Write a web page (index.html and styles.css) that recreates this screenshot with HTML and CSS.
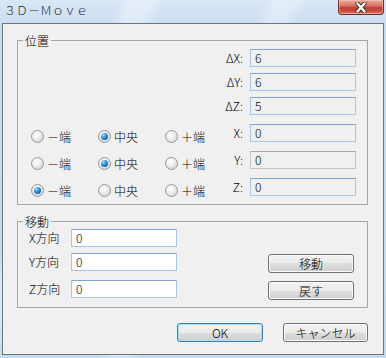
FILE: index.html
```
<!DOCTYPE html>
<html lang="ja">
<head>
<meta charset="utf-8">
<title>3D-Move</title>
<link rel="stylesheet" href="styles.css">
</head>
<body>
<div class="window">
  <div class="titlebar">
    <span class="title">３Ｄ－Ｍｏｖｅ</span>
    <div class="close">
      <svg width="14" height="11" viewBox="0 0 14 11">
        <path d="M3.5 1.5 L10.5 9.5 M10.5 1.5 L3.5 9.5" stroke="#4a2a28" stroke-width="4.2" stroke-linecap="round" fill="none"/>
        <path d="M3.5 1.5 L10.5 9.5 M10.5 1.5 L3.5 9.5" stroke="#ffffff" stroke-width="2.4" stroke-linecap="round" fill="none"/>
      </svg>
    </div>
  </div>
  <div class="client">
    <fieldset class="group g1">
      <legend>位置</legend>
      <div class="g1-body">
        <div class="delta-rows">
          <div class="frow"><span class="flabel">ΔX:</span><div class="field ro">6</div></div>
          <div class="frow"><span class="flabel">ΔY:</span><div class="field ro">6</div></div>
          <div class="frow"><span class="flabel">ΔZ:</span><div class="field ro">5</div></div>
        </div>
        <div class="pos-rows">
          <div class="frow">
            <div class="radios">
              <div class="ritem"><span class="radio"></span><span class="rlabel">－端</span></div>
              <div class="ritem"><span class="radio on"><span class="dot"></span></span><span class="rlabel">中央</span></div>
              <div class="ritem"><span class="radio"></span><span class="rlabel">＋端</span></div>
            </div>
            <span class="flabel">X:</span><div class="field ro">0</div>
          </div>
          <div class="frow">
            <div class="radios">
              <div class="ritem"><span class="radio"></span><span class="rlabel">－端</span></div>
              <div class="ritem"><span class="radio on"><span class="dot"></span></span><span class="rlabel">中央</span></div>
              <div class="ritem"><span class="radio"></span><span class="rlabel">＋端</span></div>
            </div>
            <span class="flabel">Y:</span><div class="field ro gray">0</div>
          </div>
          <div class="frow">
            <div class="radios">
              <div class="ritem"><span class="radio on"><span class="dot"></span></span><span class="rlabel">－端</span></div>
              <div class="ritem"><span class="radio"></span><span class="rlabel">中央</span></div>
              <div class="ritem"><span class="radio"></span><span class="rlabel">＋端</span></div>
            </div>
            <span class="flabel">Z:</span><div class="field ro">0</div>
          </div>
        </div>
      </div>
    </fieldset>
    <fieldset class="group g2">
      <legend>移動</legend>
      <div class="g2-body">
        <div class="mrow"><span class="mlabel">X方向</span><div class="field">0</div></div>
        <div class="mrow"><span class="mlabel">Y方向</span><div class="field">0</div><div class="btn side">移動</div></div>
        <div class="mrow last"><span class="mlabel">Z方向</span><div class="field">0</div><div class="btn side">戻す</div></div>
      </div>
    </fieldset>
    <div class="footer">
      <div class="btn ok default">OK</div>
      <div class="btn cancel">キャンセル</div>
    </div>
  </div>
</div>
</body>
</html>
```
FILE: styles.css
```
html, body {
  margin: 0;
  padding: 0;
}
body {
  font-family: "Noto Sans CJK JP", "Noto Sans", sans-serif;
  font-size: 12px;
  font-weight: 300;
  color: #000;
  background: #cfe0f2;
}
.window {
  width: 386px;
  height: 358px;
  box-sizing: border-box;
  padding: 0 2px 3px 2px;
  display: flex;
  flex-direction: column;
  background:
    linear-gradient(115deg, rgba(255,255,255,0) 0 22%, rgba(255,255,255,0.35) 24% 27%, rgba(255,255,255,0) 30% 48%, rgba(255,255,255,0.3) 50% 53%, rgba(255,255,255,0) 56% 100%),
    linear-gradient(#d9e7f5, #c8dbef 30px, #c6daee);
}
.titlebar {
  height: 23px;
  flex: none;
  display: flex;
  justify-content: space-between;
  align-items: flex-start;
}
.title {
  padding: 3px 0 0 2px;
  line-height: 14px;
  font-size: 12px;
  color: #1b2a3d;
}
.close {
  width: 46px;
  height: 15px;
  box-sizing: border-box;
  border: 1px solid #6b2e28;
  border-top: none;
  border-radius: 0 0 4px 4px;
  background: linear-gradient(#e9a99c 0%, #d8786a 40%, #c0402f 55%, #c84e3c 80%, #e0887a 100%);
  box-shadow: inset 0 0 0 1px rgba(255,210,200,0.45);
  display: flex;
  align-items: center;
  justify-content: center;
}
.close svg {
  display: block;
}
.client {
  flex: 1;
  border: 1px solid #6b7580;
  background: #f0f0f0;
  display: flex;
  flex-direction: column;
  padding: 10px 15px 0 14px;
}
.group {
  margin: 0;
  padding: 0;
  border: 1px solid #a5a5a5;
  min-width: 0;
}
.group legend {
  margin-left: 5px;
  padding: 0 2px;
  height: 13px;
  line-height: 13px;
}
.g1-body {
  padding: 2px 11px 8px 13px;
  display: flex;
  flex-direction: column;
  gap: 9px;
}
.delta-rows {
  display: flex;
  flex-direction: column;
  gap: 6px;
}
.pos-rows {
  display: flex;
  flex-direction: column;
  gap: 9px;
}
.frow {
  display: flex;
  justify-content: flex-end;
  align-items: center;
  height: 18px;
}
.flabel {
  margin-right: 7px;
  line-height: 18px;
}
.field {
  width: 106px;
  height: 18px;
  box-sizing: border-box;
  border: 1px solid #a9c6e4;
  border-top-color: #7fa3cc;
  background: #ffffff;
  padding-left: 4px;
  line-height: 16px;
  flex: none;
}
.field.ro {
  background: #f0f0f0;
}
.field.gray {
  border-color: #c4c4c4;
  border-top-color: #a8a8a8;
}
.radios {
  display: flex;
  margin-right: auto;
  align-self: flex-start;
  margin-top: 6px;
  height: 13px;
}
.ritem {
  width: 67px;
  display: flex;
  align-items: center;
  gap: 3px;
}
.rlabel {
  line-height: 13px;
}
.radio {
  width: 13px;
  height: 13px;
  box-sizing: border-box;
  border-radius: 50%;
  border: 1px solid #979797;
  background: radial-gradient(circle at 40% 35%, #ffffff 0, #f2f2f2 35%, #d4d4d4 80%, #c8c8c8 100%);
  display: flex;
  align-items: center;
  justify-content: center;
  flex: none;
}
.dot {
  width: 7px;
  height: 7px;
  border-radius: 50%;
  background: radial-gradient(circle at 35% 30%, #a9e2ff 0, #3a9ae0 35%, #0f5fa8 75%, #0b3f77 100%);
}
.group.g2 {
  margin-top: 10px;
}
.g2-body {
  padding: 1px 13px 9px 11px;
  display: flex;
  flex-direction: column;
  gap: 6px;
}
.mrow {
  display: flex;
  align-items: flex-start;
  height: 18px;
}
.mrow.last {
  margin-top: 3px;
}
.mlabel {
  width: 42px;
  line-height: 18px;
  flex: none;
}
.btn {
  box-sizing: border-box;
  height: 19px;
  border: 1px solid #707070;
  border-radius: 3px;
  background: linear-gradient(#f2f2f2 0%, #ebebeb 50%, #dddddd 50%, #cfcfcf 100%);
  box-shadow: inset 0 0 0 1px #fbfbfb;
  display: flex;
  align-items: center;
  justify-content: center;
  line-height: 17px;
  flex: none;
}
.btn.side {
  width: 86px;
  margin-left: auto;
  margin-top: 1px;
}
.footer {
  margin-top: 15px;
  display: flex;
  justify-content: flex-end;
  gap: 20px;
}
.btn.ok {
  width: 86px;
}
.btn.cancel {
  width: 85px;
}
.btn.default {
  border-color: #3c7fb1;
  box-shadow: inset 0 0 0 1px #a6dcf7;
}
```
